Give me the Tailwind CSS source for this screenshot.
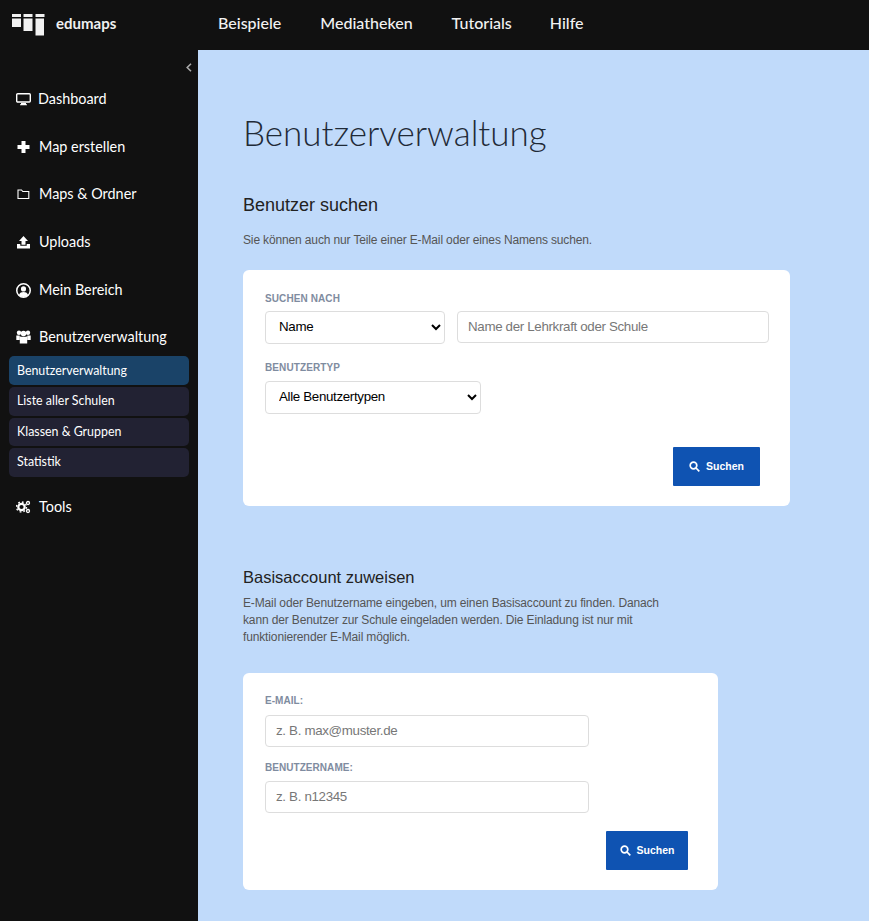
<!DOCTYPE html>
<html lang="de">
<head>
<meta charset="utf-8">
<script src="https://cdn.jsdelivr.net/npm/@tailwindcss/browser@4"></script>
</head>
<body class="h-[921px] overflow-hidden bg-[#111111] font-['Liberation_Sans',Arial,sans-serif]">
<header class="flex h-[50px] items-center bg-[#111111] font-['Lato',sans-serif] text-white">
  <div class="flex w-[218px] items-center pl-[12px]">
    <svg width="33" height="22" viewBox="0 0 33 22" fill="#f2f2f2"><path d="M0 0h9v3H0zM0 4.500h9V13H0zM11.500 0h9v3h-9zM11.500 4.500h9V17h-9zM23.500 0h9v3h-9zM23.500 4.500h8.500V21.500h-8.500z"/></svg>
    <span class="ml-[11px] mb-[3px] text-[15px] font-bold text-[#f0f0f0]">edumaps</span>
  </div>
  <nav class="mb-[5px] flex gap-[39px] text-[16px] font-medium text-[#f2f2f2]">
    <a>Beispiele</a><a>Mediatheken</a><a>Tutorials</a><a class="ml-[-1px]">Hilfe</a>
  </nav>
</header>
<div class="flex h-[871px]">
  <aside class="w-[198px] shrink-0 bg-[#111111] font-['Lato',sans-serif] text-[14.400px] text-white">
    <div class="flex h-[34px] items-center justify-end pr-[6px]">
      <svg width="6" height="9" viewBox="0 0 6 9" fill="none" stroke="#aaaaaa" stroke-width="1.600"><path d="M5 .8 1.200 4.500 5 8.200"/></svg>
    </div>
    <ul class="flex flex-col">
      <li class="flex h-[30px] items-center gap-[7px] pl-[16px]">
        <svg width="15" height="14" viewBox="0 0 15 14" fill="none"><rect x=".7" y="1.700" width="13.600" height="8.300" rx="1" stroke="#fff" stroke-width="1.400" fill="#111"/><path d="M5 11h5v1.200h1v1H4v-1h1z" fill="#fff"/></svg>
        <span>Dashboard</span>
      </li>
      <li class="mt-[18px] flex h-[30px] items-center gap-[8px] pl-[16px]">
        <svg width="15" height="14" viewBox="0 0 14 14" fill="#fff"><path d="M5 1h4v4h4v4H9v4H5V9H1V5h4z"/></svg>
        <span>Map erstellen</span>
      </li>
      <li class="mt-[17px] flex h-[30px] items-center gap-[8px] pl-[16px]">
        <svg width="15" height="14" viewBox="0 0 14 14" fill="none" stroke="#fff" stroke-width="1.100"><path d="M1.500 3h3.500l1.300 1.500h6v7h-10.800z"/></svg>
        <span>Maps &amp; Ordner</span>
      </li>
      <li class="mt-[18px] flex h-[30px] items-center gap-[8px] pl-[16px]">
        <svg width="15" height="14" viewBox="0 0 14 14" fill="#fff"><path d="M7 1 11.500 6H9v3.800H5V6H2.500zM.5 9h3.300v1.700h6.400V9h3.300v4.500H.5z"/></svg>
        <span>Uploads</span>
      </li>
      <li class="mt-[18px] flex h-[30px] items-center gap-[8px] pl-[16px]">
        <svg width="15" height="15" viewBox="0 0 14 14"><circle cx="7" cy="7" r="6.300" fill="none" stroke="#fff" stroke-width="1.400"/><circle cx="7" cy="5.500" r="2.400" fill="#fff"/><path d="M2.800 11c.8-1.800 2.300-2.500 4.200-2.500s3.400.7 4.200 2.500c-1 1.200-2.500 2-4.200 2s-3.200-.8-4.200-2z" fill="#fff"/></svg>
        <span>Mein Bereich</span>
      </li>
      <li class="mt-[17px] flex h-[30px] items-center gap-[8px] pl-[16px]">
        <svg width="15" height="14" viewBox="0 0 15 14" fill="#fff"><circle cx="3" cy="2.800" r="2.200"/><circle cx="12" cy="2.800" r="2.200"/><circle cx="7.500" cy="3.500" r="2.800"/><path d="M.3 5.500h3.200v4.500H.3zM11.500 5.500h3.200v4.500h-3.200zM3.800 6.800h7.400V13.500H3.800z"/><path d="M3.500 5.500 4.500 6.800 3.800 10H3.500zM11.500 5.500 10.500 6.800 11.200 10h.3z"/></svg>
        <span>Benutzerverwaltung</span>
      </li>
    </ul>
    <ul class="ml-[9px] mt-[4px] flex w-[180px] flex-col gap-[2px] text-[12.400px]">
      <li class="flex h-[29px] items-center rounded-[5px] bg-[#1a4368] pt-[2px] pl-[8px]">Benutzerverwaltung</li>
      <li class="flex h-[29px] items-center rounded-[5px] bg-[#222233] pb-[1px] pl-[8px]">Liste aller Schulen</li>
      <li class="flex h-[28px] items-center rounded-[5px] bg-[#222233] pl-[8px]">Klassen &amp; Gruppen</li>
      <li class="flex h-[29px] items-center rounded-[5px] bg-[#222233] pb-[1px] pl-[8px]">Statistik</li>
    </ul>
    <div class="mt-[15px] flex h-[30px] items-center gap-[8px] pl-[16px]">
      <svg width="15" height="14" viewBox="0 0 15 14"><circle cx="5.500" cy="7" r="3.200" fill="none" stroke="#fff" stroke-width="2.200"/><circle cx="5.500" cy="7" r="5" fill="none" stroke="#fff" stroke-width="1.400" stroke-dasharray="1.800 2.100"/><circle cx="12" cy="3" r="1.500" fill="none" stroke="#fff" stroke-width="1.300"/><circle cx="12" cy="11" r="1.500" fill="none" stroke="#fff" stroke-width="1.300"/></svg>
      <span>Tools</span>
    </div>
  </aside>
  <main class="flex-1 bg-[#c0dafa] pl-[45px] text-[#333333]">
    <h1 class="mt-[60px] font-['Lato',sans-serif] text-[35px] leading-[44px] font-light text-[#1f2a37]">Benutzerverwaltung</h1>

    <h2 class="mt-[39px] text-[18px] leading-[24px] font-normal text-[#222222]">Benutzer suchen</h2>
    <p class="mt-[15px] text-[12px] leading-[16px] tracking-[-0.14px] text-[#555555]">Sie können auch nur Teile einer E-Mail oder eines Namens suchen.</p>

    <section class="mt-[22px] h-[236px] w-[547px] rounded-[6px] bg-white pl-[22px] pt-[23px]">
      <label class="block text-[10px] leading-[12px] font-bold tracking-[0.1px] text-[#7f8ca0]">SUCHEN NACH</label>
      <div class="mt-[6px] flex items-start gap-[12px]">
        <select class="h-[33px] w-[180px] rounded-[4px] border border-[#dddddd] bg-white pb-[2px] pl-[9px] text-[13.333px] tracking-[-0.33px] text-black"><option>Name</option></select>
        <input class="h-[32px] w-[312px] rounded-[4px] border border-[#dddddd] bg-white pb-[2px] pl-[10px] text-[13.333px] tracking-[-0.33px] placeholder:text-[#777777]" placeholder="Name der Lehrkraft oder Schule">
      </div>
      <label class="mt-[18px] block text-[10px] leading-[12px] font-bold tracking-[0.1px] text-[#7f8ca0]">BENUTZERTYP</label>
      <select class="mt-[7px] block h-[33px] w-[216px] rounded-[4px] border border-[#dddddd] bg-white pb-[2px] pl-[9px] text-[13.333px] tracking-[-0.33px] text-black"><option>Alle Benutzertypen</option></select>
      <div class="mt-[33px] flex justify-end pr-[30px]">
        <button class="flex h-[39px] w-[87px] items-center justify-center gap-[6px] rounded-[1px] bg-[#0f53b2] text-[10.500px] font-bold text-white">
          <svg width="11" height="11" viewBox="0 0 11 11" fill="none" stroke="#fff" stroke-width="1.700"><circle cx="4.500" cy="4.500" r="3.300"/><path d="M7 7l3.300 3.300"/></svg>
          Suchen
        </button>
      </div>
    </section>

    <h2 class="mt-[59px] text-[16.500px] leading-[24px] font-normal text-[#222222]">Basisaccount zuweisen</h2>
    <p class="mt-[6px] w-[430px] text-[12px] leading-[17px] tracking-[-0.14px] text-[#555555]">E-Mail oder Benutzername eingeben, um einen Basisaccount zu finden. Danach kann der Benutzer zur Schule eingeladen werden. Die Einladung ist nur mit funktionierender E-Mail möglich.</p>

    <section class="mt-[27px] h-[217px] w-[475px] rounded-[6px] bg-white pl-[22px] pt-[22px]">
      <label class="block text-[10px] leading-[12px] font-bold tracking-[0.05px] text-[#7f8ca0]">E-MAIL:</label>
      <input class="mt-[8px] block h-[32px] w-[324px] rounded-[4px] border border-[#dddddd] bg-white pb-[2px] pl-[10px] text-[13.333px] tracking-[-0.33px] placeholder:text-[#777777]" placeholder="z. B. max@muster.de">
      <label class="mt-[15px] block text-[10px] leading-[12px] font-bold tracking-[0.05px] text-[#7f8ca0]">BENUTZERNAME:</label>
      <input class="mt-[7px] block h-[32px] w-[324px] rounded-[4px] border border-[#dddddd] bg-white pb-[2px] pl-[10px] text-[13.333px] tracking-[-0.33px] placeholder:text-[#777777]" placeholder="z. B. n12345">
      <div class="mt-[18px] flex justify-end pr-[30px]">
        <button class="flex h-[39px] w-[82px] items-center justify-center gap-[6px] rounded-[1px] bg-[#0f53b2] text-[10.500px] font-bold text-white">
          <svg width="11" height="11" viewBox="0 0 11 11" fill="none" stroke="#fff" stroke-width="1.700"><circle cx="4.500" cy="4.500" r="3.300"/><path d="M7 7l3.300 3.300"/></svg>
          Suchen
        </button>
      </div>
    </section>
  </main>
</div>
</body>
</html>
